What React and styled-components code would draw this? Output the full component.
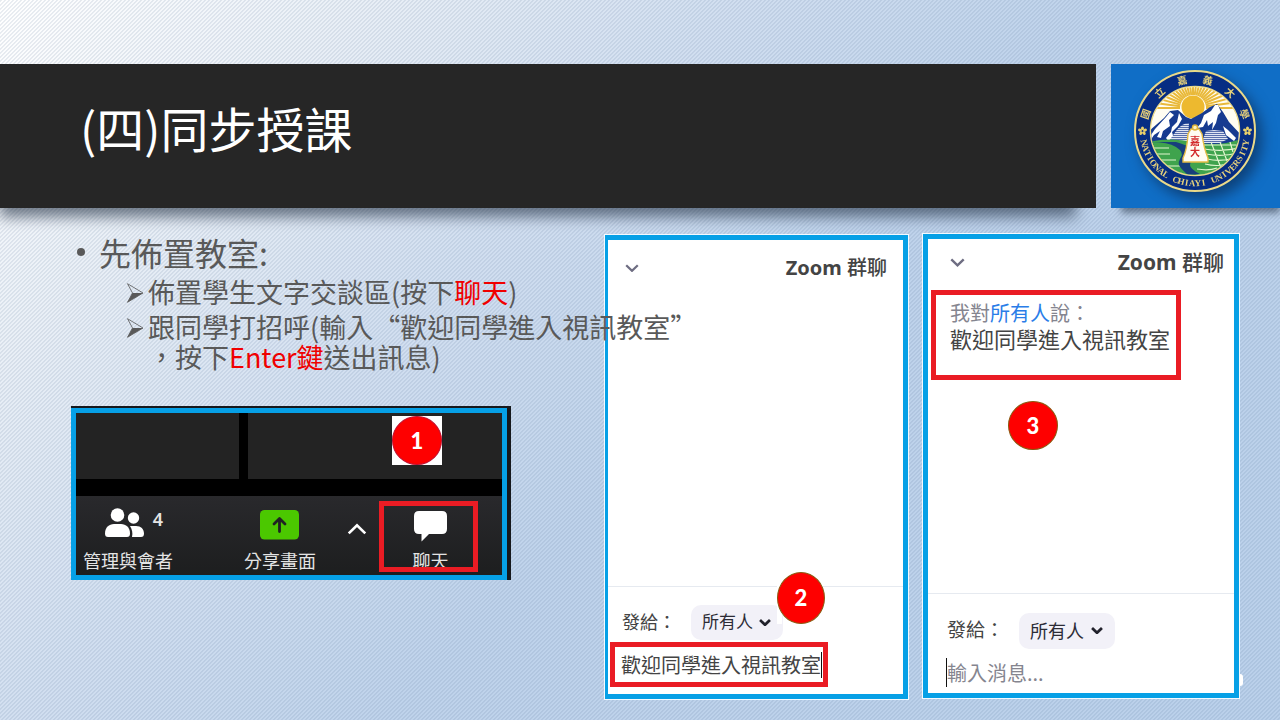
import React from "react";
import styled, { createGlobalStyle, css } from "styled-components";

const Global = createGlobalStyle`
  *, *::before, *::after { box-sizing: border-box; }
  body { margin: 0; }
  button, input, select { font: inherit; }
`;

const BLUE = "#06a0e6";
const RED = "#ea1c24";

const Slide = styled.main`
  position: relative;
  min-height: 100vh;
  padding-top: 64px;
  overflow: hidden;
  font-family: "Noto Sans CJK TC", sans-serif;
  color: #595959;
  background:
    linear-gradient(135deg, rgba(80, 110, 145, 0.12) 25%, transparent 25% 50%, rgba(80, 110, 145, 0.12) 50% 75%, transparent 75%) 0 0 / 4px 4px,
    linear-gradient(135deg, #ffffff 0%, #e9eff6 18%, #d2dff0 36%, #bfd3eb 55%, #bad0ea 100%);
`;

const HeaderStack = styled.div`
  position: relative;
  z-index: 0;
`;

const Header = styled.header`
  display: flex;
  gap: 15px;
  height: 144px;
`;

const TitleBar = styled.div`
  position: relative;
  flex: 1;
  display: flex;
  align-items: center;
  padding: 0 80px 18px;
  background: #262626;
  &::before {
    content: "";
    position: absolute;
    z-index: -1;
    left: 0;
    right: 20px;
    bottom: 0;
    height: 40px;
    box-shadow: 0 9px 14px rgba(30, 45, 65, 0.6);
  }
`;

const Title = styled.h1`
  margin: 0;
  font-size: 48px;
  line-height: 64px;
  font-weight: 400;
  color: #fff;
`;

const LogoBox = styled.div`
  position: relative;
  width: 169px;
  padding: 4px 0 0 20px;
  background: #106ec6;
  &::before {
    content: "";
    position: absolute;
    z-index: -1;
    left: 10px;
    right: 0;
    bottom: 0;
    height: 40px;
    box-shadow: 0 5px 7px rgba(30, 45, 65, 0.55);
  }
`;

const Seal = styled.svg`
  display: block;
  filter: drop-shadow(6px 7px 7px rgba(10, 40, 80, 0.65));
`;

const Body = styled.div`
  display: grid;
  grid-template-columns: minmax(0, 1fr) 303px 316px;
  gap: 15px;
  padding: 26px 41px 20px 0;
  align-items: start;
`;

const Left = styled.section`
  position: relative;
  z-index: 2;
  margin-right: -15px;
  padding-left: 71px;
`;

const Topic = styled.h2`
  display: flex;
  align-items: center;
  gap: 14px;
  margin: 0;
  padding-left: 6px;
  font-size: 32px;
  line-height: 36px;
  font-weight: 400;
  &::before {
    content: "";
    width: 8px;
    height: 8px;
    border-radius: 50%;
    background: #595959;
  }
`;

const Steps = styled.ul`
  margin: 7px 0 0;
  padding: 0 0 0 55px;
  list-style: none;
  font-size: 27px;
  line-height: 30px;
  white-space: nowrap;
`;

const Step = styled.li`
  display: flex;
  margin-bottom: 5px;
  svg { flex: none; margin: 6px 4px 0 0; }
`;

const Hot = styled.span`
  color: #f00000;
`;

const Meeting = styled.div`
  width: 440px;
  margin-top: 34px;
  padding: 2px 4px 0 0;
  background: #16181c;
`;

const MeetingFrame = styled.div`
  border: 5px solid ${BLUE};
  background: #000;
`;

const Tiles = styled.div`
  display: grid;
  grid-template-columns: 163px 1fr;
  gap: 9px;
  height: 66px;
`;

const Tile = styled.div`
  display: flex;
  justify-content: flex-end;
  align-items: flex-start;
  padding: 3px 60px 0 0;
  background: #232323;
`;

const BadgeCard = styled.div`
  background: #fff;
  height: 49px;
`;

const Badge = styled.div`
  display: flex;
  align-items: center;
  justify-content: center;
  width: ${(p) => p.$w}px;
  height: ${(p) => p.$h}px;
  border: 1px solid ${(p) => p.$edge || "#8a5a10"};
  border-radius: 50%;
  background: #fe0000;
  color: #fff;
  font-family: Lato, "Noto Sans", sans-serif;
  font-weight: 900;
  font-size: 22px;
  line-height: 24px;
`;

const Toolbar = styled.div`
  display: flex;
  align-items: flex-start;
  height: 79px;
  margin-top: 17px;
  padding: 5px 0 0 7px;
  background: linear-gradient(#29292c, #1d1e1f);
`;

const tool = css`
  display: flex;
  flex-direction: column;
  align-items: center;
  height: 71px;
  padding: 0;
  border: 0;
  background: none;
  color: #e4e4e4;
  font-size: 18px;
  line-height: 24px;
  white-space: nowrap;
`;

const Tool = styled.button`
  ${tool}
  justify-content: space-between;
  width: ${(p) => p.$w}px;
  margin-right: ${(p) => p.$after}px;
`;

const ChatTool = styled.button`
  ${tool}
  gap: 6px;
  width: 99px;
  padding: 5px 0 0 4px;
  overflow: hidden;
  border: 5px solid ${RED};
`;

const ToolIcon = styled.span`
  display: flex;
  gap: 8px;
  padding: ${(p) => p.$pad};
  font-family: "Noto Sans", sans-serif;
  font-weight: 600;
  line-height: 22px;
`;

const Expand = styled.button`
  width: 20px;
  margin: 22px 12px 0 0;
  padding: 0;
  border: 0;
  background: none;
  line-height: 0;
`;

const Panel = styled.section`
  position: relative;
  display: flex;
  flex-direction: column;
  height: 464px;
  margin-top: ${(p) => (p.$wide ? 0 : 1)}px;
  border: 5px solid ${BLUE};
  border-left-width: ${(p) => (p.$wide ? 5 : 3)}px;
  box-shadow: 0 0 0 1px #f4faff;
  background: #fff;
  color: #444;
`;

const PanelHead = styled.div`
  display: flex;
  align-items: center;
  justify-content: space-between;
  padding: ${(p) => (p.$wide ? "8px 10px 0 22px" : "13px 16px 0 17px")};
  line-height: 30px;
`;

const PanelTitle = styled.h3`
  margin: 0;
  font-family: "Noto Sans", "Noto Sans CJK TC", sans-serif;
  font-size: ${(p) => (p.$wide ? 21 : 20)}px;
  font-weight: 700;
  color: #444;
  span { font-weight: 500; }
`;

const IconButton = styled.button`
  padding: 0;
  border: 0;
  background: none;
  line-height: 0;
`;

const Message = styled.div`
  width: 250px;
  height: 90px;
  margin: 13px 0 0 3px;
  padding: 6px 14px;
  border: 5px solid ${RED};
  p { margin: 0; white-space: nowrap; }
`;

const From = styled.p`
  font-size: 20px;
  line-height: 24px;
  color: #85858f;
  a { color: #2a7de8; text-decoration: none; }
`;

const Said = styled.p`
  font-size: 22px;
  line-height: 26px;
`;

const BadgeThree = styled.div`
  padding: 21px 0 0 80px;
`;

const Composer = styled.div`
  margin-top: auto;
  border-top: 1px solid #e6eaf0;
  padding: ${(p) => (p.$wide ? "19px 0 0 18px" : "18px 0 0 2px")};
  height: ${(p) => (p.$wide ? 100 : 108)}px;
`;

const Recipient = styled.div`
  display: flex;
  align-items: center;
  gap: 15px;
  padding-left: ${(p) => (p.$wide ? 1 : 12)}px;
  font-size: ${(p) => (p.$wide ? 19 : 18)}px;
  line-height: 28px;
  label { padding-bottom: 4px; }
`;

const Picker = styled.span`
  position: relative;
  svg { position: absolute; right: 12px; top: 50%; margin-top: -4px; pointer-events: none; }
`;

const Select = styled.select`
  display: block;
  appearance: none;
  width: ${(p) => (p.$wide ? 96 : 92)}px;
  height: ${(p) => (p.$wide ? 36 : 35)}px;
  padding: 0 0 3px 11px;
  border: 0;
  border-radius: 10px;
  background: #f2f1f8;
  color: #2c2c36;
  font-size: ${(p) => (p.$wide ? 18 : 17)}px;
`;

const Draft = styled.div`
  display: flex;
  align-items: center;
  width: 218px;
  height: 45px;
  margin-top: 2px;
  padding-left: 6px;
  border: 5px solid ${RED};
`;

const Entry = styled.input`
  width: ${(p) => p.$w}px;
  height: ${(p) => p.$h}px;
  padding: 0;
  border: 0;
  border-${(p) => p.$caret}: 1px solid #111;
  outline: 0;
  background: none;
  color: #444;
  font-size: ${(p) => p.$size}px;
  &::placeholder { color: #85858f; opacity: 1; }
`;

const Reply = styled.div`
  padding-top: 9px;
  line-height: 0;
`;

const FloatingBadge = styled.div`
  position: absolute;
  right: 78px;
  bottom: 70px;
  background: linear-gradient(#fff, #fff) no-repeat 0 0 / 5px 100%;
`;

const PageMark = styled.div`
  position: absolute;
  right: 37px;
  bottom: 34px;
  width: 3px;
  height: 12px;
  border-radius: 0 3px 3px 0;
  background: #fff;
`;

const Arrow = () => (
  <svg width="18" height="20" viewBox="0 0 18 20" aria-hidden="true">
    <path d="M1.500 .7 17 10 1.500 19.300 6.500 10Z" fill="none" stroke="#595959" strokeWidth=".8" />
    <path d="M6.500 10H17L1.500 19.300Z" fill="#595959" />
  </svg>
);

const Chevron = ({ size = 14, color = "#6e6d82", width = 2.4, up }) => (
  <svg width={size} height={size * 0.6} viewBox="0 0 15 9" aria-hidden="true">
    <path
      d={up ? "M1.300 7.800 7.500 1.800 13.700 7.800" : "M1.300 1.300 7.500 7.300 13.700 1.300"}
      fill="none"
      stroke={color}
      strokeWidth={width}
    />
  </svg>
);

const People = () => (
  <svg width="40" height="30" viewBox="0 0 40 30" fill="#fff" aria-hidden="true">
    <circle cx="12.500" cy="7" r="6.800" />
    <path d="M0 25.500c0-6 4-9.500 9-9.500h7c5 0 9 3.500 9 9.500 0 2.500-1 3.500-3 3.500H3c-2 0-3-1-3-3.500Z" />
    <circle cx="28.500" cy="10" r="5.700" />
    <path d="M25 18h6c5 0 8 3 8 7.500 0 2.500-1 3.500-3 3.500h-9c1-4 0-8-2-11Z" />
  </svg>
);

const Share = () => (
  <svg width="40" height="30" viewBox="0 0 40 30" aria-hidden="true">
    <rect width="39" height="29.500" rx="4.500" fill="#4bc800" />
    <path
      d="M19.500 21.500V9M14 14l5.500-5.500L25 14"
      fill="none"
      stroke="#202322"
      strokeWidth="2.800"
      strokeLinecap="round"
      strokeLinejoin="round"
    />
  </svg>
);

const Bubble = () => (
  <svg width="33" height="31" viewBox="0 0 33 31" style={{ flex: "none" }} aria-hidden="true">
    <path d="M5 0h23q5 0 5 5v13q0 5-5 5H15l-7.500 7.500V23H5q-5 0-5-5V5q0-5 5-5Z" fill="#fff" />
  </svg>
);

const around = (deg, r) => {
  const a = (deg * Math.PI) / 180;
  return [62 + r * Math.sin(a), 62 - r * Math.cos(a)];
};

const RingText = ({ chars, from, to, r, size, flip, family }) =>
  [...chars].map((c, i) => {
    const deg = from + ((to - from) * i) / (chars.length - 1);
    const [x, y] = around(deg, r);
    return (
      <text
        key={i}
        transform={`translate(${x} ${y}) rotate(${flip ? deg + 180 : deg})`}
        y={size * 0.36}
        textAnchor="middle"
        fontSize={size}
        fontWeight="700"
        fontFamily={family}
        fill="#e8d27a"
      >
        {c}
      </text>
    );
  });

const Flower = ({ deg }) => {
  const [x, y] = around(deg, 52.5);
  return (
    <g transform={`translate(${x} ${y})`} fill="#e8cf6a">
      {[0, 72, 144, 216, 288].map((a) => (
        <ellipse key={a} cy="-2.600" rx="1.500" ry="2" transform={`rotate(${a})`} />
      ))}
      <circle r=".8" fill="#0b2d7c" />
    </g>
  );
};

const Emblem = () => (
  <Seal width="128" height="128" viewBox="-2 -1 128 128" role="img" aria-label="National Chiayi University">
    <defs>
      <clipPath id="scene"><circle cx="62" cy="62" r="44" /></clipPath>
      <pattern id="hatch" width="2" height="2" patternUnits="userSpaceOnUse">
        <rect width="2" height="2" fill="#dfe5f3" />
        <path d="M0 .5h2" stroke="#4a62a4" strokeWidth=".9" />
      </pattern>
    </defs>
    <circle cx="62" cy="62" r="60" fill="#062d83" stroke="#ead989" strokeWidth="2" />
    <circle cx="62" cy="62" r="44.500" fill="#fff" stroke="#ead989" strokeWidth="1.500" />
    <g clipPath="url(#scene)">
      <rect x="16" y="16" width="92" height="56" fill="#fffdf2" />
      <g stroke="#e9b93a" strokeWidth="2">
        {Array.from({ length: 25 }, (_, i) => {
          const a = ((-90 + i * 7.5) * Math.PI) / 180;
          return (
            <path
              key={i}
              d={`M${60 + 13 * Math.sin(a)} ${39 - 13 * Math.cos(a)}L${60 + 55 * Math.sin(a)} ${39 - 55 * Math.cos(a)}`}
            />
          );
        })}
      </g>
      <circle cx="60" cy="38" r="11.500" fill="#edb92f" />
      <path d="M16 62 31 49l6-7 8-1 8 7 5 2 11-6 8-6 7-3 6 8 6 10 12 13v10H16Z" fill="#173b90" />
      <path d="m22 60 11-12 4-5 4 3-5 5 1 6-7 5-2 7-4-1 3-6-6 4-4 6h-3Z" fill="#fff" />
      <path d="m46 44 3 6-4 7-6 6 2 7-5 3-3-4 5-6 1-5 5-5Z" fill="#fff" />
      <path d="m82 36-4 6-7 4-3 8-4 5 6-1 4-7 1 6 5-4-1 8 4-7 2-8 3-3-3-7Z" fill="#fff" />
      <path d="M43 62q6-8 13-8l-1 18H36Z" fill="url(#hatch)" />
      <path d="m70 70 3-8 8-1 9 1 5 8-8 4H70Z" fill="url(#hatch)" />
      <path d="m90 57 5 4 8 8-2 3-8-6Z" fill="#fff" />
      <path d="M16 73q20-5 45 0t47-3v38H16Z" fill="#3fa34d" />
      <g fill="none" stroke="#e2f6cf" strokeWidth="1.200">
        <path d="M70 76h38M71 80q18 3 36-1M73 85q16 3 32-1M74 90q14 3 27-1M72 95q12 3 22 0M64 100q12 2 20-1M78 73l10 26M87 73l7 19M97 73l3 10M18 79h18M22 85h15M28 91h15M34 97h16" />
      </g>
      <path d="M18 73q17 0 25 5t5 10-2 8 9 10l12-1q-10-5-10-9t3-7-1-8-16-8Z" fill="#173f7c" />
    </g>
    <path d="M58 60h8l3 5q2 15 6 24v4H50v-4q4-8 5-24Z" fill="#fffdf2" stroke="#e5bc45" strokeWidth="1.400" />
    <circle cx="62" cy="58.500" r="2.500" fill="#fff2bd" stroke="#dfb43b" strokeWidth="1.400" />
    <text x="62" y="76" textAnchor="middle" fontSize="10" fontWeight="700" fontFamily='"Noto Sans CJK TC", sans-serif' fill="#d32b2b">嘉</text>
    <text x="62" y="87" textAnchor="middle" fontSize="10" fontWeight="700" fontFamily='"Noto Sans CJK TC", sans-serif' fill="#d32b2b">大</text>
    <RingText chars="國立嘉義大學" from={-71} to={71} r={52} size={10} family='"Noto Sans CJK TC", sans-serif' />
    <RingText chars="NATIONAL CHIAYI UNIVERSITY" from={257} to={103} r={52} size={9} flip family='"Liberation Serif", serif' />
    <Flower deg={-90} />
    <Flower deg={90} />
  </Seal>
);

const RecipientRow = ({ id, wide }) => (
  <Recipient $wide={wide}>
    <label htmlFor={id}>發給：</label>
    <Picker>
      <Select id={id} $wide={wide} defaultValue="all">
        <option value="all">所有人</option>
      </Select>
      <Chevron size={12} color="#22222c" width={3.4} />
    </Picker>
  </Recipient>
);

export default function App() {
  return (
    <Slide>
      <Global />
      <HeaderStack>
        <Header>
          <TitleBar>
            <Title>(四)同步授課</Title>
          </TitleBar>
          <LogoBox>
            <Emblem />
          </LogoBox>
        </Header>
      </HeaderStack>
      <Body>
        <Left>
          <Topic>先佈置教室:</Topic>
          <Steps>
            <Step>
              <Arrow />
              <span>佈置學生文字交談區(按下<Hot>聊天</Hot>)</span>
            </Step>
            <Step>
              <Arrow />
              <span>
                跟同學打招呼(輸入“歡迎同學進入視訊教室”
                <br />
                ，按下<Hot>Enter鍵</Hot>送出訊息)
              </span>
            </Step>
          </Steps>
          <Meeting>
            <MeetingFrame>
              <Tiles>
                <Tile />
                <Tile>
                  <BadgeCard>
                    <Badge $w={50} $h={49} $edge="#c01030">1</Badge>
                  </BadgeCard>
                </Tile>
              </Tiles>
              <Toolbar>
                <Tool $w={90} $after={71}>
                  <ToolIcon $pad="7px 0 0 12px">
                    <People />4
                  </ToolIcon>
                  管理與會者
                </Tool>
                <Tool $w={72} $after={31}>
                  <ToolIcon $pad="9px 0 0">
                    <Share />
                  </ToolIcon>
                  分享畫面
                </Tool>
                <Expand aria-label="展開">
                  <Chevron size={20} color="#fff" width={2} up />
                </Expand>
                <ChatTool>
                  <Bubble />
                  聊天
                </ChatTool>
              </Toolbar>
            </MeetingFrame>
          </Meeting>
        </Left>

        <Panel>
          <PanelHead>
            <IconButton aria-label="收合"><Chevron /></IconButton>
            <PanelTitle>Zoom <span>群聊</span></PanelTitle>
          </PanelHead>
          <Composer>
            <RecipientRow id="to-draft" />
            <Draft>
              <Entry aria-label="訊息" $w={201} $h={26} $size={20} $caret="right" defaultValue="歡迎同學進入視訊教室" />
            </Draft>
          </Composer>
          <FloatingBadge>
            <Badge $w={48} $h={52}>2</Badge>
          </FloatingBadge>
        </Panel>

        <Panel $wide>
          <PanelHead $wide>
            <IconButton aria-label="收合"><Chevron size={15} /></IconButton>
            <PanelTitle $wide>Zoom <span>群聊</span></PanelTitle>
          </PanelHead>
          <Message>
            <From>我對<a href="#all">所有人</a>說：</From>
            <Said>歡迎同學進入視訊教室</Said>
          </Message>
          <BadgeThree>
            <Badge $w={50} $h={49}>3</Badge>
          </BadgeThree>
          <Composer $wide>
            <RecipientRow id="to-reply" wide />
            <Reply>
              <Entry aria-label="輸入消息" $w={260} $h={29} $size={20} $caret="left" placeholder="輸入消息..." />
            </Reply>
          </Composer>
        </Panel>
      </Body>
      <PageMark />
    </Slide>
  );
}
